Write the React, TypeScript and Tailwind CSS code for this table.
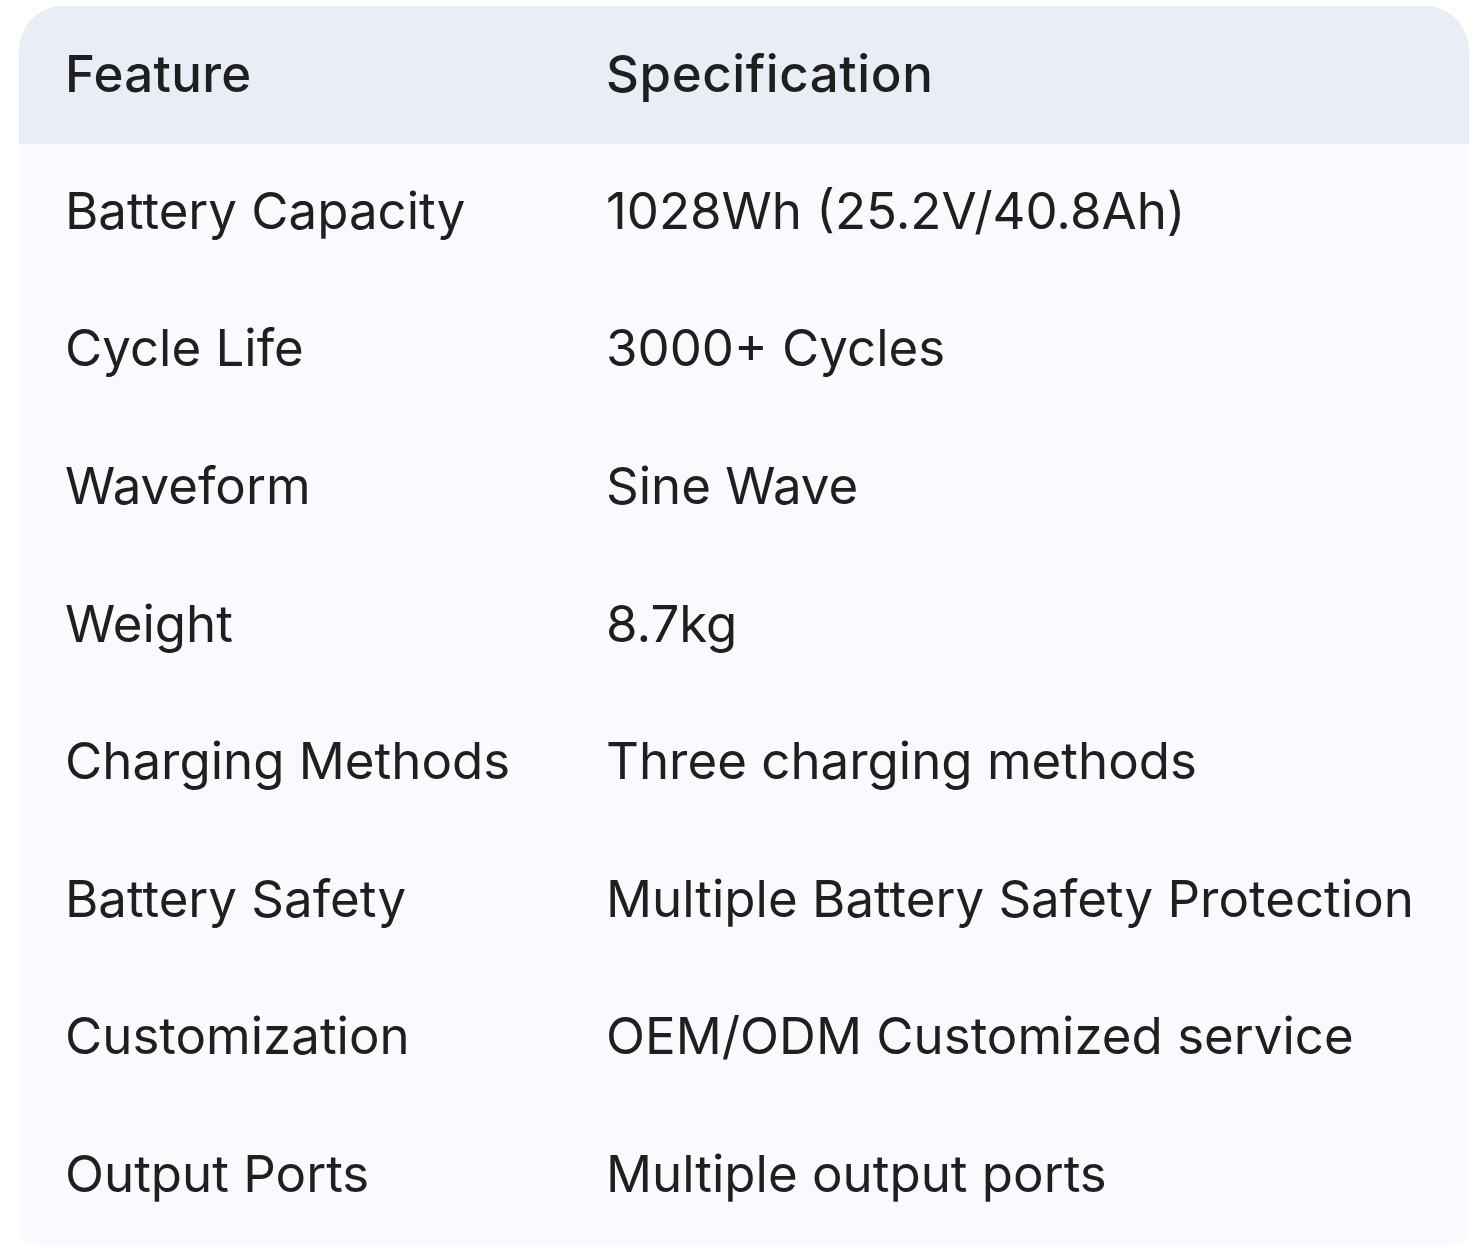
const rows: [string, string][] = [
  ["Battery Capacity", "1028Wh (25.2V/40.8Ah)"],
  ["Cycle Life", "3000+ Cycles"],
  ["Waveform", "Sine Wave"],
  ["Weight", "8.7kg"],
  ["Charging Methods", "Three charging methods"],
  ["Battery Safety", "Multiple Battery Safety Protection"],
  ["Customization", "OEM/ODM Customized service"],
  ["Output Ports", "Multiple output ports"],
]

export default function App() {
  return (
    <div className="min-h-[1252px] bg-white pl-[19px] pr-[15px] pt-[6px]" style={{ fontFamily: "Inter, Roboto, sans-serif" }}>
      <div className="w-[1450px] overflow-hidden rounded-t-[44px] rounded-b-[12px] bg-[#f8fafd] text-[#1f1f1f]">
        <table className="w-full table-fixed border-collapse text-left text-[51px] leading-none">
          <colgroup>
            <col className="w-[541px]" />
            <col />
          </colgroup>
          <thead>
            <tr className="h-[138px] bg-[#e9eef6]">
              <th className="pb-[4px] pl-[46px] font-medium tracking-[0.3px]">Feature</th>
              <th className="pb-[4px] pl-[46px] font-medium tracking-[0.6px]">Specification</th>
            </tr>
          </thead>
          <tbody>
            {rows.map(([f, s]) => (
              <tr key={f} className="h-[137.6px]">
                <td className="whitespace-nowrap pb-[5px] pl-[46px]">{f}</td>
                <td className="whitespace-nowrap pb-[5px] pl-[46px]">{s}</td>
              </tr>
            ))}
          </tbody>
        </table>
      </div>
    </div>
  )
}
